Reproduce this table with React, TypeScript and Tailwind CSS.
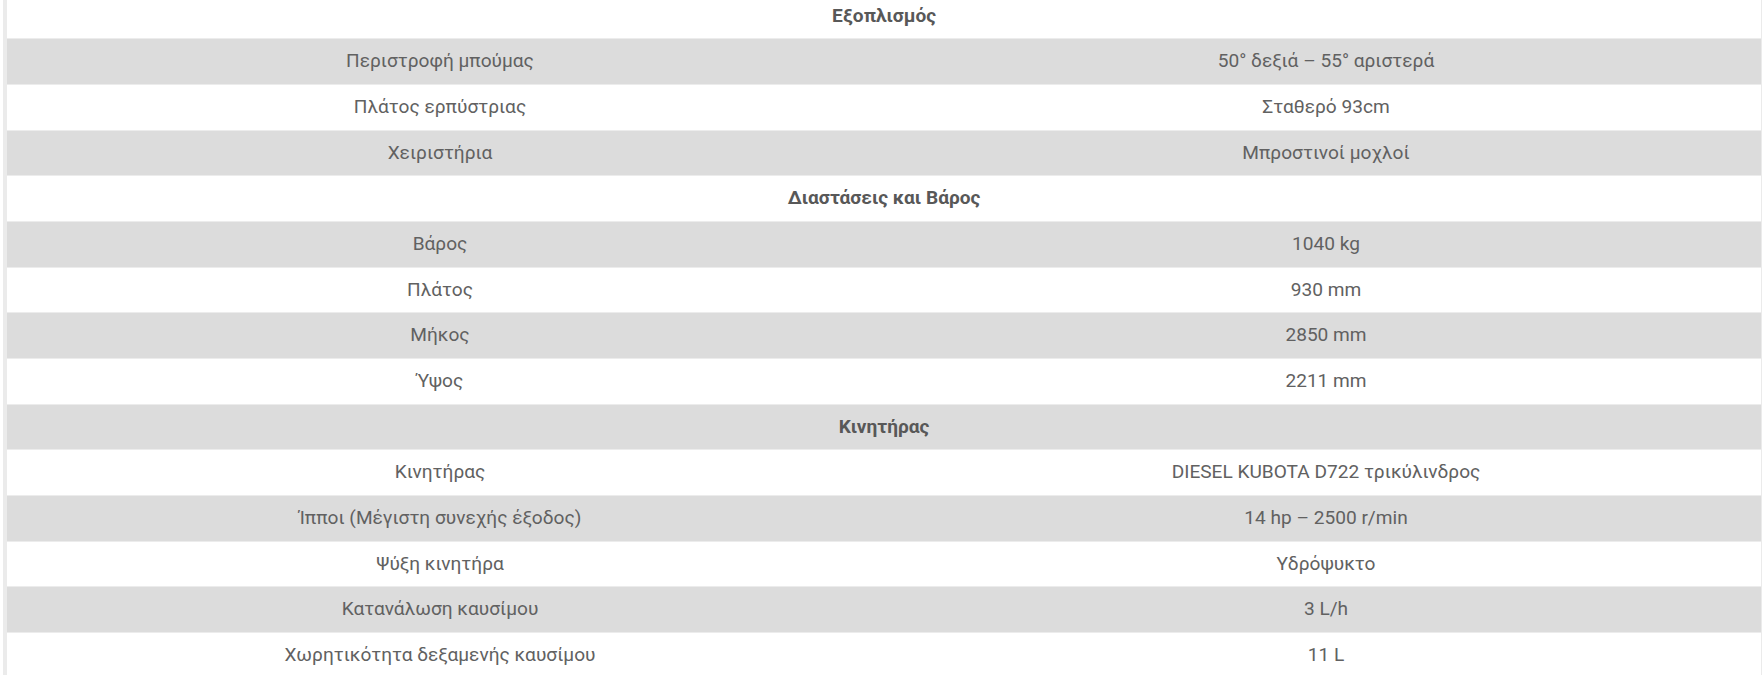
import React from 'react';

type Row = { kind: 'head'; title: string } | { kind: 'spec'; label: string; value: string };

const rows: Row[] = [
  { kind: 'head', title: 'Εξοπλισμός' },
  { kind: 'spec', label: 'Περιστροφή μπούμας', value: '50° δεξιά – 55° αριστερά' },
  { kind: 'spec', label: 'Πλάτος ερπύστριας', value: 'Σταθερό 93cm' },
  { kind: 'spec', label: 'Χειριστήρια', value: 'Μπροστινοί μοχλοί' },
  { kind: 'head', title: 'Διαστάσεις και Βάρος' },
  { kind: 'spec', label: 'Βάρος', value: '1040 kg' },
  { kind: 'spec', label: 'Πλάτος', value: '930 mm' },
  { kind: 'spec', label: 'Μήκος', value: '2850 mm' },
  { kind: 'spec', label: 'Ύψος', value: '2211 mm' },
  { kind: 'head', title: 'Κινητήρας' },
  { kind: 'spec', label: 'Κινητήρας', value: 'DIESEL KUBOTA D722 τρικύλινδρος' },
  { kind: 'spec', label: 'Ίπποι (Μέγιστη συνεχής έξοδος)', value: '14 hp – 2500 r/min' },
  { kind: 'spec', label: 'Ψύξη κινητήρα', value: 'Υδρόψυκτο' },
  { kind: 'spec', label: 'Κατανάλωση καυσίμου', value: '3 L/h' },
  { kind: 'spec', label: 'Χωρητικότητα δεξαμενής καυσίμου', value: '11 L' },
];

export default function App() {
  return (
    <div className="w-[1762px] h-[675px] overflow-hidden bg-white pl-[3px]" style={{ fontFamily: 'Roboto, "Noto Sans", sans-serif' }}>
      <div className="-mt-[6.2px] border-l-4 border-r border-[#ebebeb] text-[19.1px] text-[#616161]">
        {rows.map((row, i) => {
          const bg = i % 2 === 0 ? 'bg-white' : 'bg-[#dcdcdc]';
          if (row.kind === 'head') {
            return (
              <div key={i} className={`${bg} h-[45.67px] border-b border-[#ececec] flex items-center justify-center font-bold text-[#585858]`}>
                {row.title}
              </div>
            );
          }
          return (
            <div key={i} className={`${bg} h-[45.67px] border-b border-[#ececec] grid grid-cols-[866px_1fr] items-center`}>
              <div className="text-center">{row.label}</div>
              <div className="text-center pl-[18px]">{row.value}</div>
            </div>
          );
        })}
      </div>
    </div>
  );
}
